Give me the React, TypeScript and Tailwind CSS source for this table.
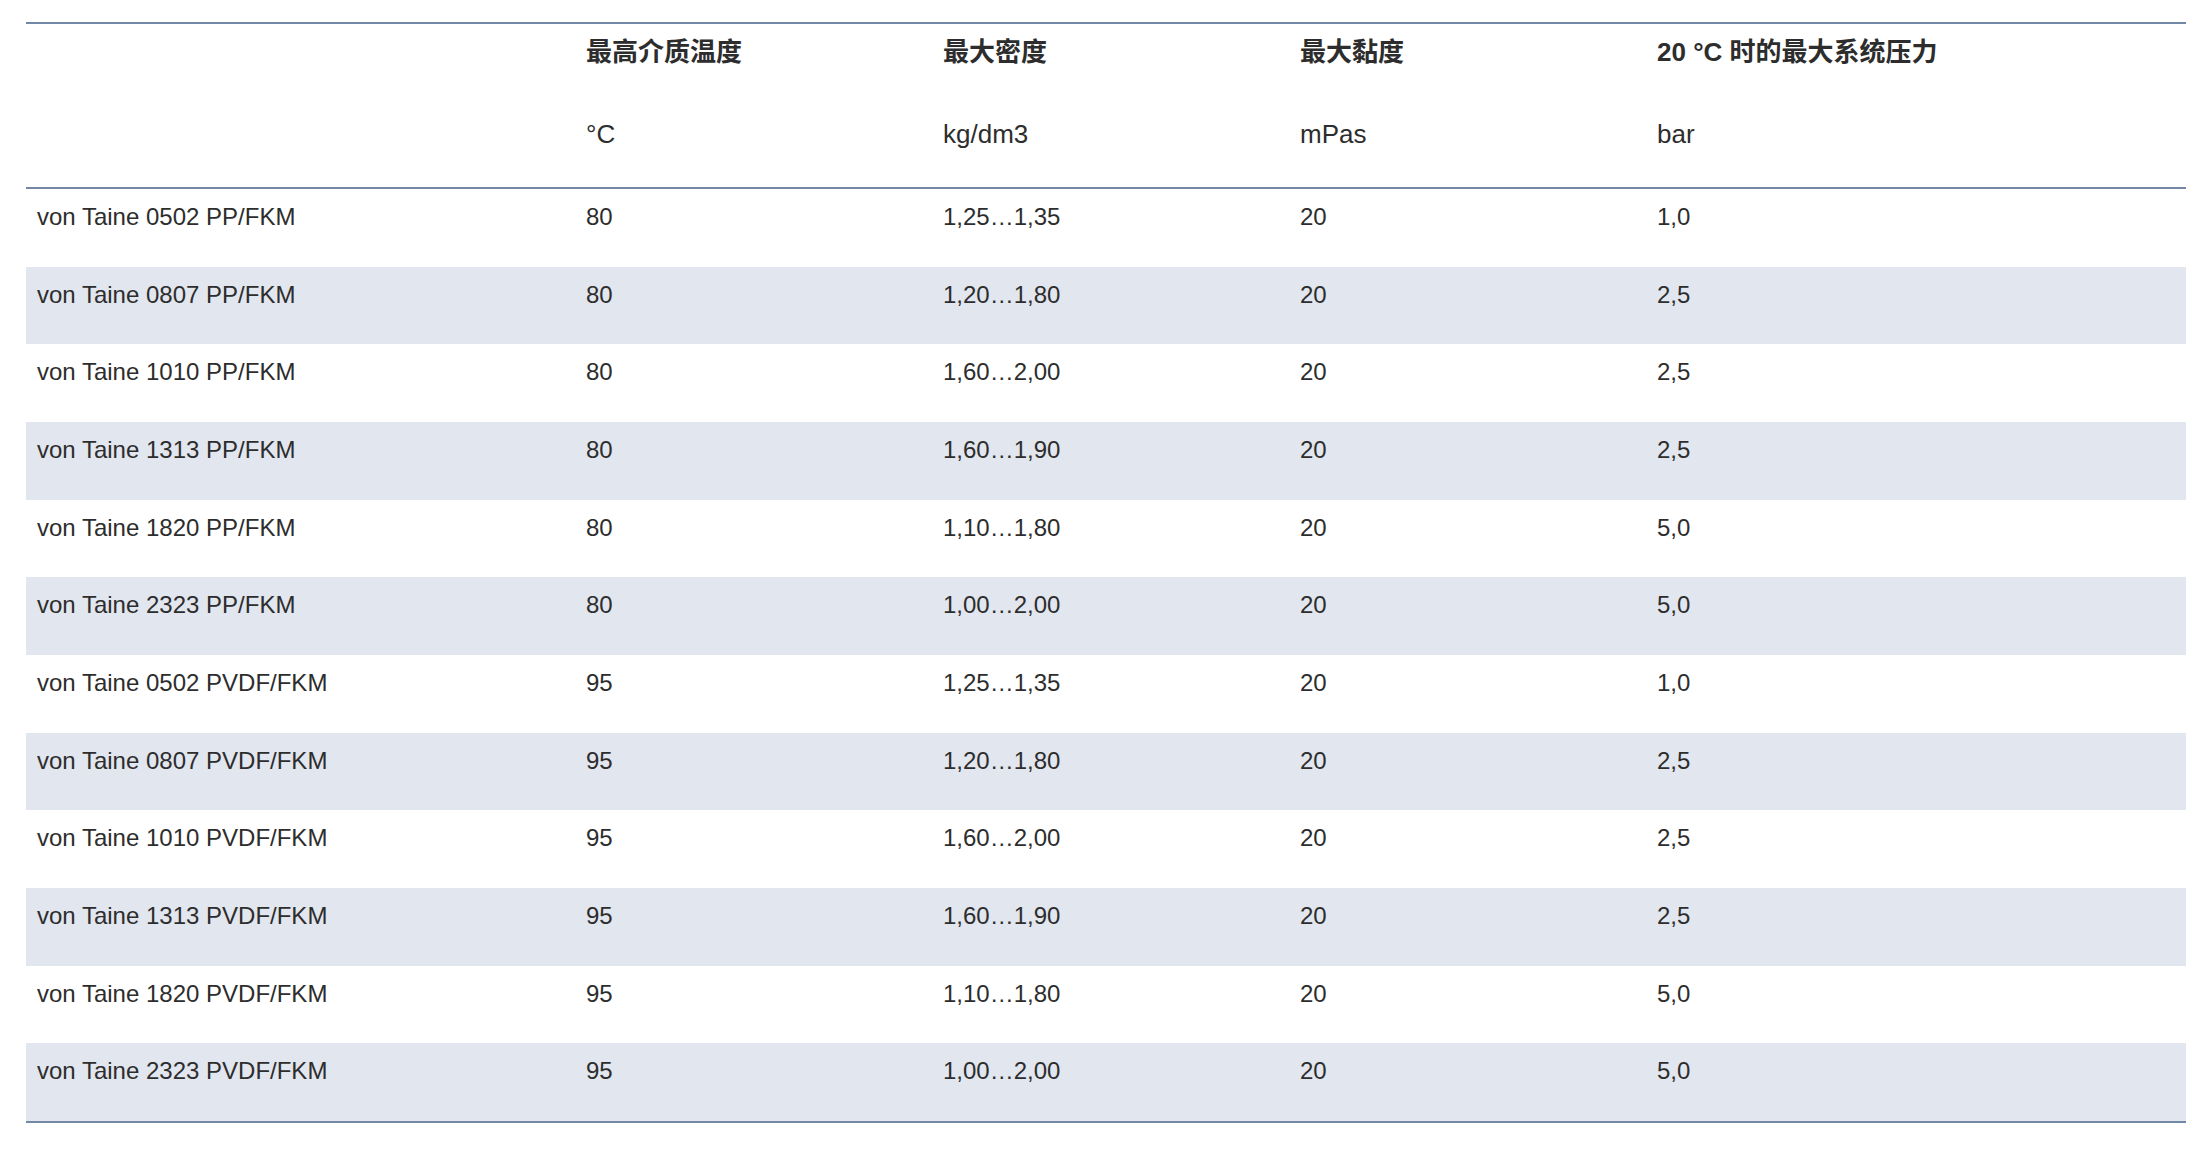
const columns = [
  { title: "最高介质温度", unit: "°C" },
  { title: "最大密度", unit: "kg/dm3" },
  { title: "最大黏度", unit: "mPas" },
  { title: "20 °C 时的最大系统压力", unit: "bar" },
];

const rows = [
  ["von Taine 0502 PP/FKM", "80", "1,25…1,35", "20", "1,0"],
  ["von Taine 0807 PP/FKM", "80", "1,20…1,80", "20", "2,5"],
  ["von Taine 1010 PP/FKM", "80", "1,60…2,00", "20", "2,5"],
  ["von Taine 1313 PP/FKM", "80", "1,60…1,90", "20", "2,5"],
  ["von Taine 1820 PP/FKM", "80", "1,10…1,80", "20", "5,0"],
  ["von Taine 2323 PP/FKM", "80", "1,00…2,00", "20", "5,0"],
  ["von Taine 0502 PVDF/FKM", "95", "1,25…1,35", "20", "1,0"],
  ["von Taine 0807 PVDF/FKM", "95", "1,20…1,80", "20", "2,5"],
  ["von Taine 1010 PVDF/FKM", "95", "1,60…2,00", "20", "2,5"],
  ["von Taine 1313 PVDF/FKM", "95", "1,60…1,90", "20", "2,5"],
  ["von Taine 1820 PVDF/FKM", "95", "1,10…1,80", "20", "5,0"],
  ["von Taine 2323 PVDF/FKM", "95", "1,00…2,00", "20", "5,0"],
];

const grid = "grid grid-cols-[549px_357px_357px_357px_1fr]";

export default function App() {
  return (
    <div className="min-h-screen bg-white pt-[22px] pl-[26px] pr-[25px] text-[#2d2d2d] font-['Liberation_Sans','Noto_Sans_CJK_SC',sans-serif]">
      <div className="border-t-2 border-b-2 border-[#7387a6]">
        {/* HEADER */}
        <div className={`${grid} h-[165px] border-b-2 border-[#7387a6] text-[26px] leading-[36px]`}>
          <div />
          {columns.map((c) => (
            <div key={c.title} className="pl-[11px] pt-[10px]">
              <div className="font-bold">{c.title}</div>
              <div className="mt-[46px]">{c.unit}</div>
            </div>
          ))}
        </div>

        {/* BODY */}
        {rows.map((r, i) => (
          <div
            key={r[0]}
            className={`${grid} h-[77.67px] text-[24px] leading-[36px] ${i % 2 === 1 ? "bg-[#e2e6ef]" : "bg-white"}`}
          >
            {r.map((cell, j) => (
              <div key={j} className="pl-[11px] pt-[10px]">
                {cell}
              </div>
            ))}
          </div>
        ))}
      </div>
    </div>
  );
}
